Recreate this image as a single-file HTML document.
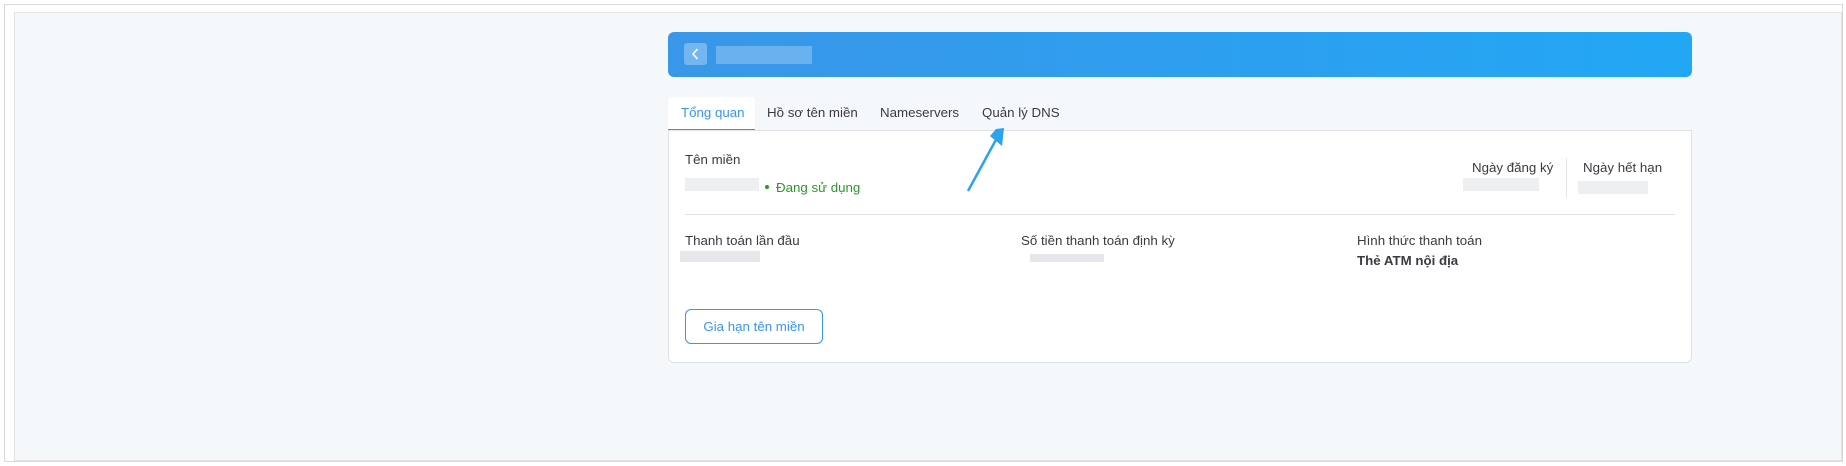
<!DOCTYPE html>
<html><head><meta charset="utf-8"><style>
*{margin:0;padding:0;box-sizing:border-box}
body{width:1846px;height:466px;background:#fff;font-family:"Liberation Sans",sans-serif;font-size:13.3px;color:#3a3a40;position:relative;overflow:hidden}
.a{position:absolute}
.blur{position:absolute;background:#e6e7ea}
</style></head><body>
<div class="a" style="left:4px;top:4px;width:1839px;height:458px;border:1px solid #d8d8d8"></div>
<div class="a" style="left:14px;top:12px;width:1828px;height:449px;background:#f5f8fb;border:1px solid #e2e2e2"></div>
<div class="a" style="left:668px;top:32px;width:1024px;height:45px;border-radius:6px;background:linear-gradient(90deg,#3a96e8,#22a7f5)"></div>
<div class="a" style="left:684px;top:43px;width:23px;height:22px;border-radius:3px;background:rgba(255,255,255,.3)"><svg width="23" height="22"><path d="M13.5 6 L9 11 L13.5 16" stroke="#fff" stroke-width="1.6" fill="none"/></svg></div>
<div class="a" style="left:716px;top:46px;width:96px;height:18px;background:rgba(255,255,255,.25)"></div>
<div class="a" style="left:668px;top:97px;width:87px;height:34px;background:#fff;border-radius:4px 4px 0 0;border-bottom:2px solid #3a96e8"></div>
<div class="a" style="left:681px;top:105px;color:#3a96e8">Tổng quan</div>
<div class="a" style="left:767px;top:105px">Hồ sơ tên miền</div>
<div class="a" style="left:880px;top:105px">Nameservers</div>
<div class="a" style="left:982px;top:105px">Quản lý DNS</div>
<div class="a" style="left:668px;top:130px;width:1024px;height:233px;background:#fff;border:1px solid #dfe1e5;border-radius:0 0 6px 6px"></div>
<svg class="a" style="left:960px;top:126px" width="50" height="68"><path d="M8 65 L38 10" stroke="#2ca3ee" stroke-width="2.5"/><path d="M36 3 L44 2 L42 20 L30 10 Z" fill="#2ca3ee"/></svg>
<div class="a" style="left:685px;top:152px">Tên miền</div>
<div class="blur" style="left:685px;top:178px;width:74px;height:13px;background:#eeeff1"></div>
<div class="a" style="left:765px;top:185px;width:4px;height:4px;border-radius:2px;background:#2a9a2a"></div>
<div class="a" style="left:776px;top:180px;color:#2a9a2a">Đang sử dụng</div>
<div class="a" style="left:1472px;top:160px">Ngày đăng ký</div>
<div class="blur" style="left:1463px;top:178px;width:76px;height:13px;background:#eeeff1"></div>
<div class="a" style="left:1566px;top:158px;width:1px;height:40px;background:#e5e5e5"></div>
<div class="a" style="left:1583px;top:160px">Ngày hết hạn</div>
<div class="blur" style="left:1578px;top:181px;width:70px;height:13px;background:#eeeff1"></div>
<div class="a" style="left:685px;top:214px;width:990px;height:1px;background:#e2e2e2"></div>
<div class="a" style="left:685px;top:233px">Thanh toán lần đầu</div>
<div class="blur" style="left:680px;top:251px;width:80px;height:11px"></div>
<div class="a" style="left:1021px;top:233px">Số tiền thanh toán định kỳ</div>
<div class="blur" style="left:1030px;top:254px;width:74px;height:8px"></div>
<div class="a" style="left:1357px;top:233px">Hình thức thanh toán</div>
<div class="a" style="left:1357px;top:253px;font-weight:bold">Thẻ ATM nội địa</div>
<div class="a" style="left:685px;top:309px;width:138px;height:35px;border:1px solid #3a96e8;border-radius:6px;color:#3a96e8;text-align:center;line-height:33px">Gia hạn tên miền</div>
</body></html>
